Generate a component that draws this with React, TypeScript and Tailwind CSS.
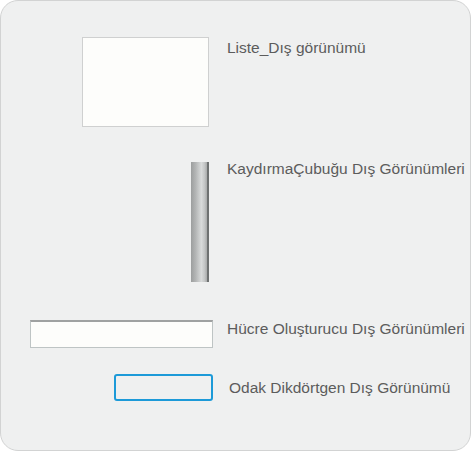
const labelFont = { fontFamily: '"Liberation Sans", Arial, sans-serif' }

function Row({
  children,
  label,
  className,
  labelClass,
}: {
  children: React.ReactNode
  label: string
  className?: string
  labelClass?: string
}) {
  return (
    <div className={`flex items-start ${className ?? ''}`}>
      <div className="w-[226px] shrink-0 flex justify-end">{children}</div>
      <span className={`text-[15.5px] leading-[17px] text-[#5c5c5c] whitespace-nowrap ${labelClass ?? ''}`} style={labelFont}>
        {label}
      </span>
    </div>
  )
}

export default function App() {
  return (
    <div className="w-[472px] h-[451px] bg-white">
      <div className="w-[471px] h-[451px] bg-[#eff0f0] border border-[#d2d3d3] rounded-[18px] pt-[36px]">
        {/* List */}
        <Row label="Liste_Dış görünümü" labelClass="mt-[2px]">
          <div className="w-[127px] h-[90px] mr-[18px] bg-[#fdfdfb] border border-[#cfd0d0]" />
        </Row>

        {/* Scrollbar */}
        <Row label="KaydırmaÇubuğu Dış Görünümleri" className="mt-[35px]" labelClass="-mt-[2px]">
          <div className="w-[18px] h-[120px] mr-[18px] flex">
            <div className="flex-1 bg-[linear-gradient(to_right,#9c9e9e,#b4b6b6_30%,#d9dbdb_65%,#c4c6c6_85%,#a8aaaa)]" />
            <div className="w-[2px] bg-[#6f7272]" />
          </div>
        </Row>

        {/* Cell renderer */}
        <Row label="Hücre Oluşturucu Dış Görünümleri" className="mt-[38px]">
          <div className="w-[183px] h-[28px] mr-[14px] bg-[#fdfdfb] border border-[#bec4c4] border-t-2 border-t-[#9fa1a1]" />
        </Row>

        {/* Focus rect */}
        <Row label="Odak Dikdörtgen Dış Görünümü" className="mt-[26px]" labelClass="mt-[5px] ml-[2px]">
          <div className="w-[99px] h-[27px] mr-[14px] rounded-[3px] border-2 border-[#1c9ad8]" />
        </Row>
      </div>
    </div>
  )
}
